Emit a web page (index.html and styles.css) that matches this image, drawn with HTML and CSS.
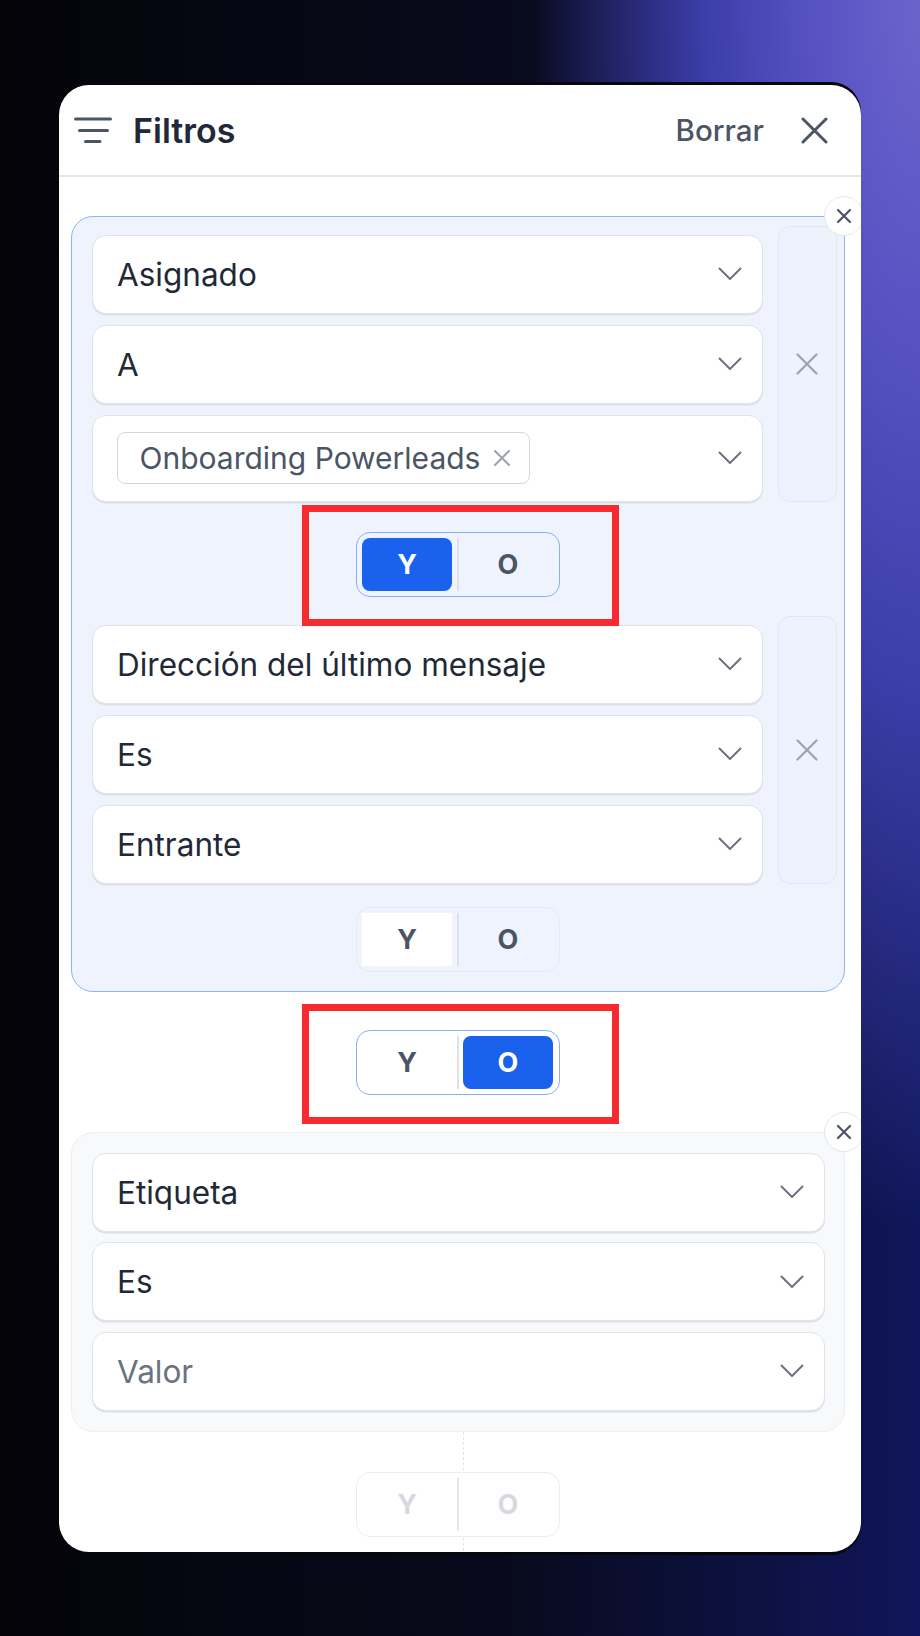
FILE: index.html
```html
<!DOCTYPE html>
<html lang="es">

<head>
    <meta charset="UTF-8">
    <meta name="viewport" content="width=device-width, initial-scale=1.0">
    <title>Filtros</title>
    <link rel="stylesheet" href="styles.css">
</head>

<body>
    <div class="panel">
        <header class="panel_head">
            <svg class="filter_icon" width="38" height="26" viewBox="0 0 38 26">
                <path d="M1.5 2H36.5M5.5 13.5H33.5M11.5 24.5H26" stroke="#4b5563" stroke-width="3" stroke-linecap="round" fill="none"/>
            </svg>
            <h1 class="panel_title">Filtros</h1>
            <button class="clear_btn">Borrar</button>
            <button class="close_btn">
                <svg width="27" height="27" viewBox="0 0 27 27">
                    <path d="M2 2L25 25M25 2L2 25" stroke="#4b5563" stroke-width="3" stroke-linecap="round"/>
                </svg>
            </button>
        </header>

        <div class="panel_body">
            <!-- grupo 1 -->
            <div class="group group_active">
                <button class="group_remove">
                    <svg width="16" height="16" viewBox="0 0 16 16">
                        <path d="M2 2L14 14M14 2L2 14" stroke="#4b5563" stroke-width="2.2" stroke-linecap="round"/>
                    </svg>
                </button>

                <div class="cond">
                    <div class="cond_fields">
                        <div class="select"><span>Asignado</span><i class="chev"></i></div>
                        <div class="select"><span>A</span><i class="chev"></i></div>
                        <div class="select select_chips">
                            <span class="chip">Onboarding Powerleads
                                <svg width="18" height="18" viewBox="0 0 18 18">
                                    <path d="M2 2L16 16M16 2L2 16" stroke="#9ca3af" stroke-width="2" stroke-linecap="round"/>
                                </svg>
                            </span>
                            <i class="chev"></i>
                        </div>
                    </div>
                    <button class="cond_remove"><i class="x_gray"></i></button>
                </div>

                <div class="toggle_row row_between">
                    <div class="toggle marked">
                        <span class="seg on">Y</span><i class="sep"></i><span class="seg">O</span>
                    </div>
                </div>

                <div class="cond">
                    <div class="cond_fields">
                        <div class="select"><span>Dirección del último mensaje</span><i class="chev"></i></div>
                        <div class="select"><span>Es</span><i class="chev"></i></div>
                        <div class="select"><span>Entrante</span><i class="chev"></i></div>
                    </div>
                    <button class="cond_remove"><i class="x_gray"></i></button>
                </div>

                <div class="toggle_row row_last">
                    <div class="toggle toggle_soft">
                        <span class="seg on_soft">Y</span><i class="sep"></i><span class="seg">O</span>
                    </div>
                </div>
            </div>

            <div class="toggle_row row_groups">
                <div class="toggle toggle_white marked">
                    <span class="seg">Y</span><i class="sep"></i><span class="seg on">O</span>
                </div>
            </div>

            <!-- grupo 2 -->
            <div class="group group_plain">
                <button class="group_remove">
                    <svg width="16" height="16" viewBox="0 0 16 16">
                        <path d="M2 2L14 14M14 2L2 14" stroke="#4b5563" stroke-width="2.2" stroke-linecap="round"/>
                    </svg>
                </button>
                <div class="cond_fields plain_fields">
                    <div class="select"><span>Etiqueta</span><i class="chev"></i></div>
                    <div class="select"><span>Es</span><i class="chev"></i></div>
                    <div class="select"><span class="placeholder">Valor</span><i class="chev"></i></div>
                </div>
            </div>

            <div class="toggle_row row_tail">
                <div class="toggle toggle_ghost">
                    <span class="seg">Y</span><i class="sep"></i><span class="seg">O</span>
                </div>
            </div>
        </div>
    </div>
</body>

</html>
```

FILE: styles.css
```css
* {
    box-sizing: border-box;
    margin: 0;
    padding: 0;
    font-family: Inter, "Noto Sans", Arial, sans-serif;
}

body {
    width: 920px;
    height: 1636px;
    overflow: hidden;
    padding: 85px 0 0 59px;
    background:
        radial-gradient(ellipse 42% 75% at 100% 0%, #6c64cc 0%, #5652c2 28%, #3d3eaa 55%, rgba(30, 34, 110, 0) 100%),
        linear-gradient(to right, #040409 0%, #080a1c 55%, #10165a 100%);
}

button {
    border: none;
    background: none;
    font: inherit;
    cursor: pointer;
}

.panel {
    width: 802px;
    height: 1467px;
    background-color: #fff;
    border-radius: 30px;
    overflow: hidden;
    box-shadow: 0 -3px 0 #06060c, 0 3px 0 #06060c;
}

.panel_head {
    height: 92px;
    border-bottom: 2px solid #e3e6eb;
    display: flex;
    align-items: center;
    padding: 0 33px 0 15px;
}

.filter_icon {
    margin-right: 21px;
}

.panel_title {
    flex: 1;
    font-size: 34px;
    font-weight: 600;
    color: #1f2937;
}

.clear_btn {
    font-size: 29.5px;
    font-weight: 500;
    color: #4b5563;
    margin-right: 37px;
}

.close_btn {
    display: flex;
}

.panel_body {
    padding: 39px 16px 0 12px;
}

/* grupos */
.group {
    position: relative;
    border-radius: 22px;
}

.group_active {
    background-color: #eef3fd;
    border: 1.5px solid #8fb1f5;
    padding: 8.5px 7.5px 19px 19.5px;
}

.group_plain {
    background-color: #f8f9fb;
    border: 1.5px solid #eceef2;
    padding: 19.5px 19.5px 20.5px 19.5px;
}

.group_remove {
    position: absolute;
    top: -21.5px;
    right: -20px;
    width: 40px;
    height: 40px;
    border-radius: 50%;
    background-color: #fff;
    border: 1.5px solid #e3e6eb;
    display: flex;
    align-items: center;
    justify-content: center;
    z-index: 2;
}

.cond {
    display: flex;
    gap: 15px;
}

.cond_fields {
    flex: 1;
    display: flex;
    flex-direction: column;
    gap: 11px;
    padding-top: 9px;
}

.plain_fields {
    padding-top: 0;
    gap: 10.5px;
}

.cond_remove {
    width: 59px;
    border: 1px solid #e1e6ef;
    border-radius: 12px;
    background-color: #eef2fc;
    display: flex;
    align-items: center;
    justify-content: center;
}

.x_gray {
    width: 22px;
    height: 22px;
    background: url("data:image/svg+xml,%3Csvg xmlns='http://www.w3.org/2000/svg' viewBox='0 0 22 22'%3E%3Cpath d='M1.5 1.5L20.5 20.5M20.5 1.5L1.5 20.5' stroke='%239ca3af' stroke-width='2.2' stroke-linecap='round'/%3E%3C/svg%3E") no-repeat center / contain;
}

.select {
    height: 79px;
    background-color: #fff;
    border: 1.5px solid #e0e3e9;
    border-radius: 14px;
    box-shadow: 0 1.5px 0 #dde0e7;
    display: flex;
    align-items: center;
    justify-content: space-between;
    padding: 0 19.5px 0 24.5px;
    font-size: 31.5px;
    color: #1f2937;
}

.select_chips {
    height: auto;
    padding-top: 16.5px;
    padding-bottom: 16.5px;
}

.placeholder {
    color: #6b7280;
}

.chev {
    width: 24px;
    height: 14px;
    background: url("data:image/svg+xml,%3Csvg xmlns='http://www.w3.org/2000/svg' viewBox='0 0 24 14'%3E%3Cpath d='M1.5 1.5L12 12L22.5 1.5' fill='none' stroke='%236b7280' stroke-width='2' stroke-linecap='round' stroke-linejoin='round'/%3E%3C/svg%3E") no-repeat center / contain;
}

.chip {
    height: 52px;
    display: flex;
    align-items: center;
    gap: 13px;
    padding: 0 18px 0 21.5px;
    border: 1.5px solid #d5d9df;
    border-radius: 8px;
    font-size: 30px;
    color: #4b5563;
}

/* Y / O */
.toggle_row {
    position: relative;
    display: flex;
    justify-content: center;
}

.group_active .toggle_row {
    margin-left: -19.5px;
    margin-right: -7.5px;
}

.row_between {
    margin-top: 30px;
    margin-bottom: 19px;
}

.row_last {
    margin-top: 23.5px;
}

.row_groups {
    margin: 38px 0 37px;
}

.row_tail {
    margin-top: 40px;
}

.row_tail::before {
    content: '';
    position: absolute;
    left: calc(50% + 5px);
    top: -40px;
    height: 240px;
    border-left: 1.5px dashed #e2e5ea;
}

.toggle {
    position: relative;
    z-index: 1;
    display: flex;
    width: 204px;
    height: 65px;
    padding: 5px;
    border: 1.5px solid #8aaef5;
    border-radius: 14px;
}

.toggle_white {
    background-color: #fff;
}

.toggle_soft {
    border-color: #e6eaf2;
}

.toggle_ghost {
    background-color: #fff;
    border-color: #eceef2;
}

.seg {
    width: 90px;
    display: flex;
    align-items: center;
    justify-content: center;
    font-size: 27px;
    font-weight: 700;
    color: #4b5563;
    border-radius: 8px;
}

.seg.on {
    background-color: #1a61ee;
    color: #fff;
}

.seg.on_soft {
    background-color: #fff;
    border-radius: 0;
}

.sep {
    width: 2px;
    margin: 0 4.5px;
    background-color: #dde2ea;
}

.toggle_ghost .seg {
    color: #d6d9df;
}

.toggle_ghost .sep {
    background-color: #e3e6ea;
}

.marked::after {
    content: '';
    position: absolute;
    top: -27.5px;
    bottom: -30px;
    left: -55.5px;
    right: -59.5px;
    border: 7px solid #f72a30;
    pointer-events: none;
}
```
